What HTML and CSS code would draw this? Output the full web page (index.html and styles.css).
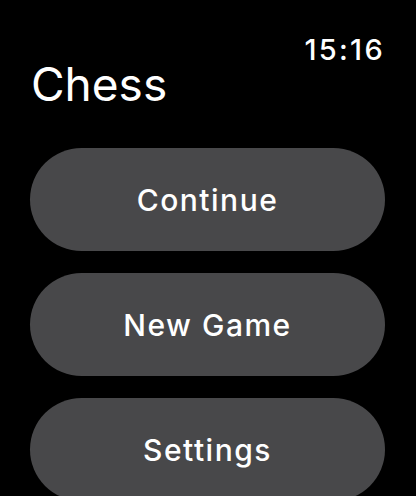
FILE: index.html
```html
<!DOCTYPE html>
<html lang="en">
<head>
    <meta charset="UTF-8">
    <meta name="viewport" content="width=device-width, initial-scale=1.0">
    <title>Chess</title>
    <link rel="stylesheet" href="styles.css">
</head>
<body>
    <div class="status">
        <span class="time">15:16</span>
    </div>
    <h1 class="title">Chess</h1>

    <div class="menu">
        <button class="menu-btn">Continue</button>
        <button class="menu-btn">New Game</button>
        <button class="menu-btn">Settings</button>
    </div>
</body>
</html>
```

FILE: styles.css
```css
body {
    margin: 0;
    background: #000;
    color: #fff;
    font-family: Inter, "Noto Sans", sans-serif;
    overflow: hidden;
}
.status {
    display: flex;
    justify-content: flex-end;
    padding: 40px 31px 0 0;
}
.time {
    font-size: 29px;
    line-height: 20px;
    font-weight: 500;
    letter-spacing: 2.3px;
}
.title {
    margin: 4px 0 0 31px;
    font-size: 46px;
    line-height: 40px;
    font-weight: 400;
}
.menu {
    display: flex;
    flex-direction: column;
    gap: 22px;
    margin-top: 44px;
    padding: 0 31px 0 30px;
}
.menu-btn {
    height: 103px;
    border: none;
    border-radius: 52px;
    background: #48484a;
    color: #fff;
    font-family: Inter, "Noto Sans", sans-serif;
    font-size: 30px;
    font-weight: 500;
    letter-spacing: 1.5px;
    cursor: pointer;
}
```
